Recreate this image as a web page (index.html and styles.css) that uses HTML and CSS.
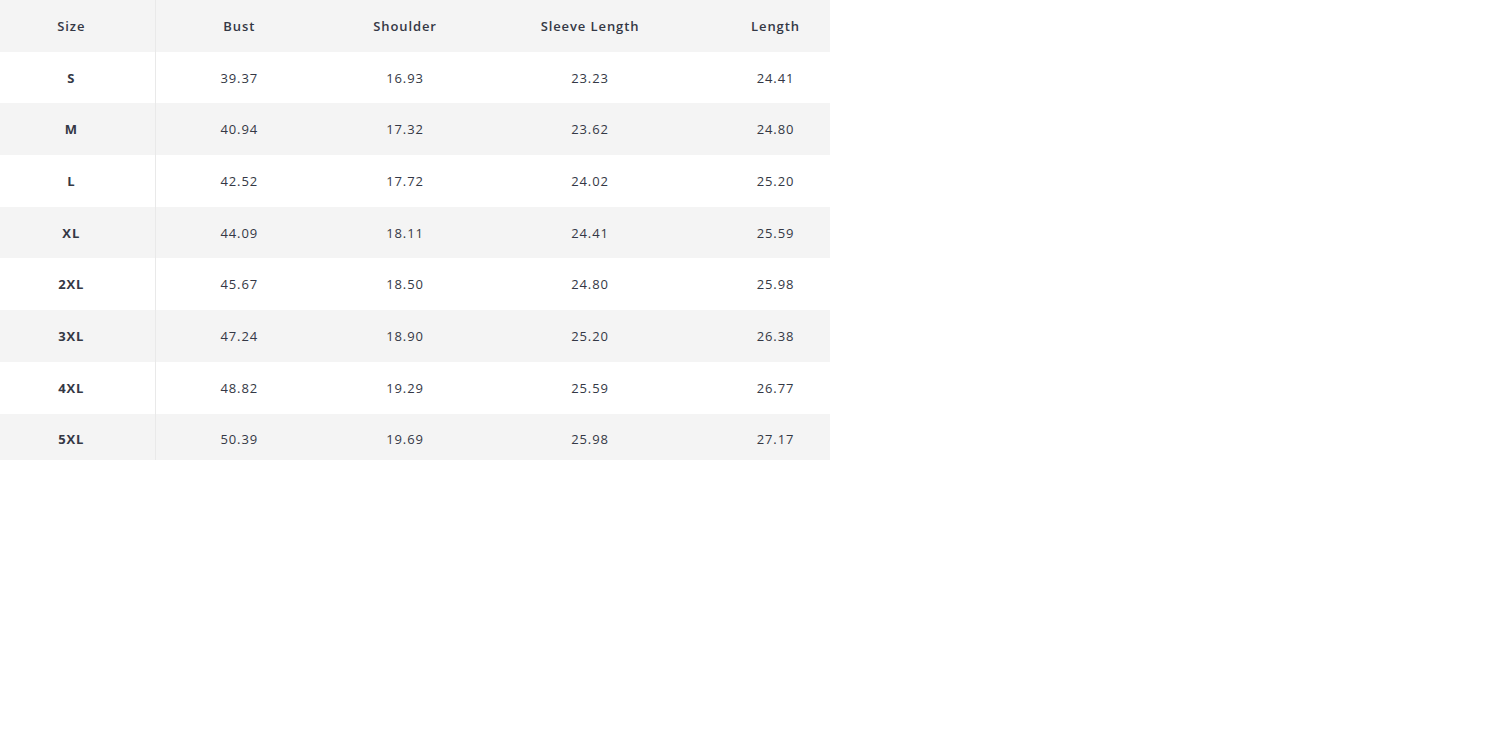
FILE: index.html
```html
<!DOCTYPE html>
<html>
<head>
<meta charset="utf-8">
<link rel="stylesheet" href="styles.css">
</head>
<body>
<div class="clip">
  <table class="size-table">
    <colgroup>
      <col class="c-size"><col class="c-bust"><col class="c-shoulder"><col class="c-sleeve"><col class="c-length">
    </colgroup>
    <thead>
      <tr><th>Size</th><th>Bust</th><th>Shoulder</th><th>Sleeve Length</th><th>Length</th></tr>
    </thead>
    <tbody>
      <tr><td>S</td><td>39.37</td><td>16.93</td><td>23.23</td><td>24.41</td></tr>
      <tr><td>M</td><td>40.94</td><td>17.32</td><td>23.62</td><td>24.80</td></tr>
      <tr><td>L</td><td>42.52</td><td>17.72</td><td>24.02</td><td>25.20</td></tr>
      <tr><td>XL</td><td>44.09</td><td>18.11</td><td>24.41</td><td>25.59</td></tr>
      <tr><td>2XL</td><td>45.67</td><td>18.50</td><td>24.80</td><td>25.98</td></tr>
      <tr><td>3XL</td><td>47.24</td><td>18.90</td><td>25.20</td><td>26.38</td></tr>
      <tr><td>4XL</td><td>48.82</td><td>19.29</td><td>25.59</td><td>26.77</td></tr>
      <tr><td>5XL</td><td>50.39</td><td>19.69</td><td>25.98</td><td>27.17</td></tr>
    </tbody>
  </table>
</div>
</body>
</html>
```
FILE: styles.css
```css
html, body {
  margin: 0;
  padding: 0;
  background: #fff;
}
.clip {
  width: 830px;
  height: 460px;
  overflow: hidden;
}
.size-table {
  margin-left: -12px;
  border-collapse: collapse;
  table-layout: fixed;
  width: 870px;
  font-family: "Open Sans", "Noto Sans", sans-serif;
  font-size: 13px;
  letter-spacing: 0.9px;
  color: #343845;
}
.c-size { width: 167px; }
.c-bust { width: 168px; }
.c-shoulder { width: 164px; }
.c-sleeve { width: 206px; }
.c-length { width: 165px; }
.size-table th,
.size-table td {
  height: 51.7px;
  padding: 0;
  text-align: center;
  vertical-align: middle;
}
.size-table th {
  font-weight: 600;
  background: #f4f4f4;
}
.size-table td {
  font-weight: 500;
}
.size-table td:first-child {
  font-weight: 700;
}
.size-table th:first-child,
.size-table td:first-child {
  border-right: 1px solid #e9e9e9;
}
.size-table tbody tr:nth-child(even) td {
  background: #f4f4f4;
}
```
